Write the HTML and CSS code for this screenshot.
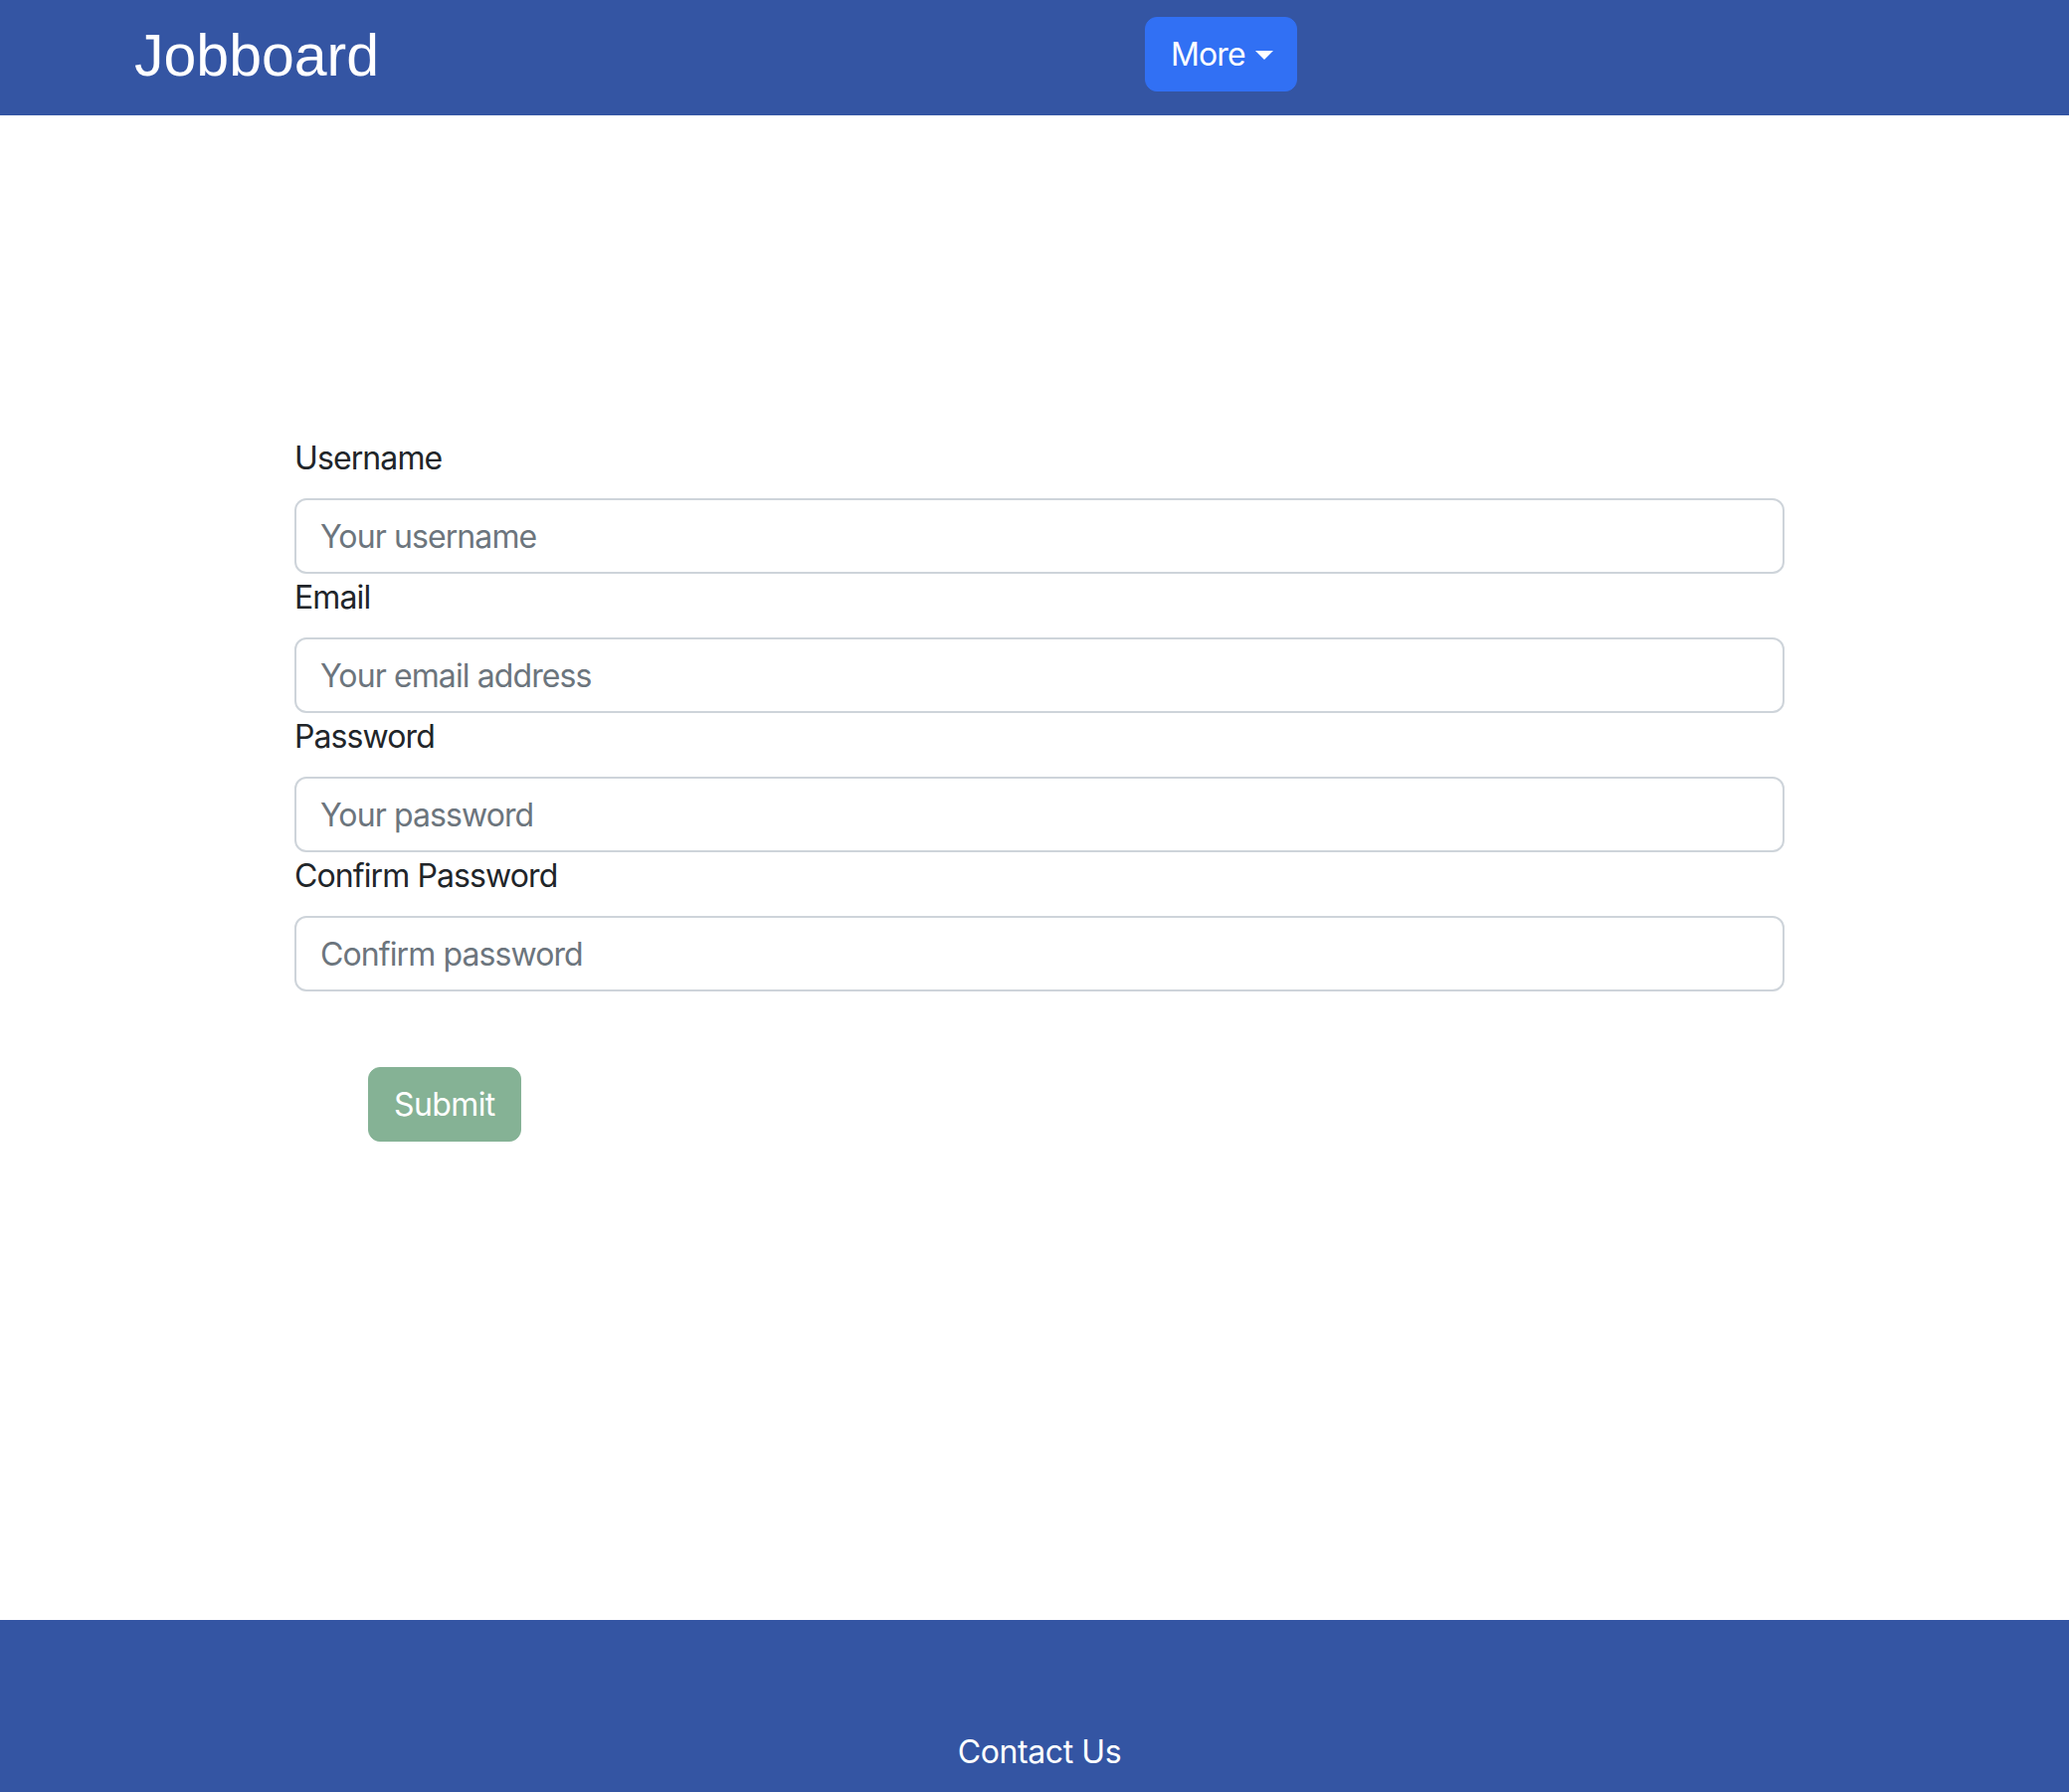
FILE: index.html
```html
<!DOCTYPE html>
<html lang="en">
<head>
<meta charset="utf-8">
<title>Jobboard</title>
<link rel="stylesheet" href="styles.css">
</head>
<body>
<header class="navbar">
  <a class="brand" href="#">Jobboard</a>
  <div class="nav-menu">
    <button class="btn-more" type="button">More<span class="caret"></span></button>
  </div>
</header>
<main class="main">
  <form class="signup-form">
    <label class="form-label" for="username">Username</label>
    <input class="form-control" id="username" type="text" placeholder="Your username">
    <label class="form-label" for="email">Email</label>
    <input class="form-control" id="email" type="email" placeholder="Your email address">
    <label class="form-label" for="password">Password</label>
    <input class="form-control" id="password" type="password" placeholder="Your password">
    <label class="form-label" for="confirm">Confirm Password</label>
    <input class="form-control" id="confirm" type="password" placeholder="Confirm password">
    <div class="actions">
      <button class="btn-submit" type="submit">Submit</button>
    </div>
  </form>
</main>
<footer class="footer">
  <p class="footer-link">Contact Us</p>
</footer>
</body>
</html>
```

FILE: styles.css
```css
* { box-sizing: border-box; }

html, body {
  margin: 0;
  padding: 0;
}

body {
  font-family: Inter, "Noto Sans", "Liberation Sans", sans-serif;
  color: #212529;
  background: #ffffff;
  overflow: hidden;
  letter-spacing: -0.9px;
}

.navbar {
  height: 116px;
  background: #3455a3;
  display: flex;
  align-items: center;
  padding-left: 135px;
}

.brand {
  font-family: "Liberation Sans", Arial, sans-serif;
  font-size: 59px;
  line-height: 1;
  letter-spacing: 0;
  color: #ffffff;
  text-decoration: none;
  width: 1016px;
  margin-bottom: 4px;
}

.nav-menu {
  display: flex;
  align-items: center;
}

.btn-more {
  height: 75px;
  padding: 0 23px 0 25px;
  border: 1px solid #3170f4;
  border-radius: 12px;
  background: #3170f4;
  color: #ffffff;
  font-family: Inter, "Noto Sans", sans-serif;
  font-size: 32px;
  line-height: 48px;
  letter-spacing: -0.9px;
  display: flex;
  align-items: center;
  margin-bottom: 7px;
}

.caret {
  display: inline-block;
  margin-left: 10px;
  width: 0;
  height: 0;
  border-top: 9px solid #ffffff;
  border-left: 9px solid transparent;
  border-right: 9px solid transparent;
  margin-top: 2px;
}

.main {
  height: 1513px;
  padding-top: 321px;
}

.signup-form {
  width: 1498px;
  margin-left: 296px;
  display: flex;
  flex-direction: column;
}

.form-label {
  display: block;
  font-size: 32px;
  line-height: 48px;
  margin-bottom: 16px;
  color: #212529;
}

.form-control {
  display: block;
  width: 100%;
  height: 76px;
  padding: 12px 24px;
  font-family: Inter, "Noto Sans", sans-serif;
  font-size: 32px;
  line-height: 48px;
  letter-spacing: -0.9px;
  color: #212529;
  background: #ffffff;
  border: 2px solid #ced4da;
  border-radius: 12px;
  outline: none;
}

.form-control::placeholder {
  color: #6c757d;
  opacity: 1;
}

.actions {
  display: flex;
  padding-top: 76px;
  padding-left: 74px;
}

.btn-submit {
  height: 75px;
  padding: 0 25px;
  border: 1px solid #85b295;
  border-radius: 12px;
  background: #85b295;
  color: #ffffff;
  font-family: Inter, "Noto Sans", sans-serif;
  font-size: 32px;
  line-height: 48px;
  letter-spacing: -0.6px;
}

.footer {
  height: 173px;
  background: #3455a3;
  padding-top: 109px;
  padding-left: 10px;
  text-align: center;
}

.footer-link {
  margin: 0;
  font-size: 32px;
  line-height: 48px;
  letter-spacing: -0.4px;
  color: #ffffff;
}
```
